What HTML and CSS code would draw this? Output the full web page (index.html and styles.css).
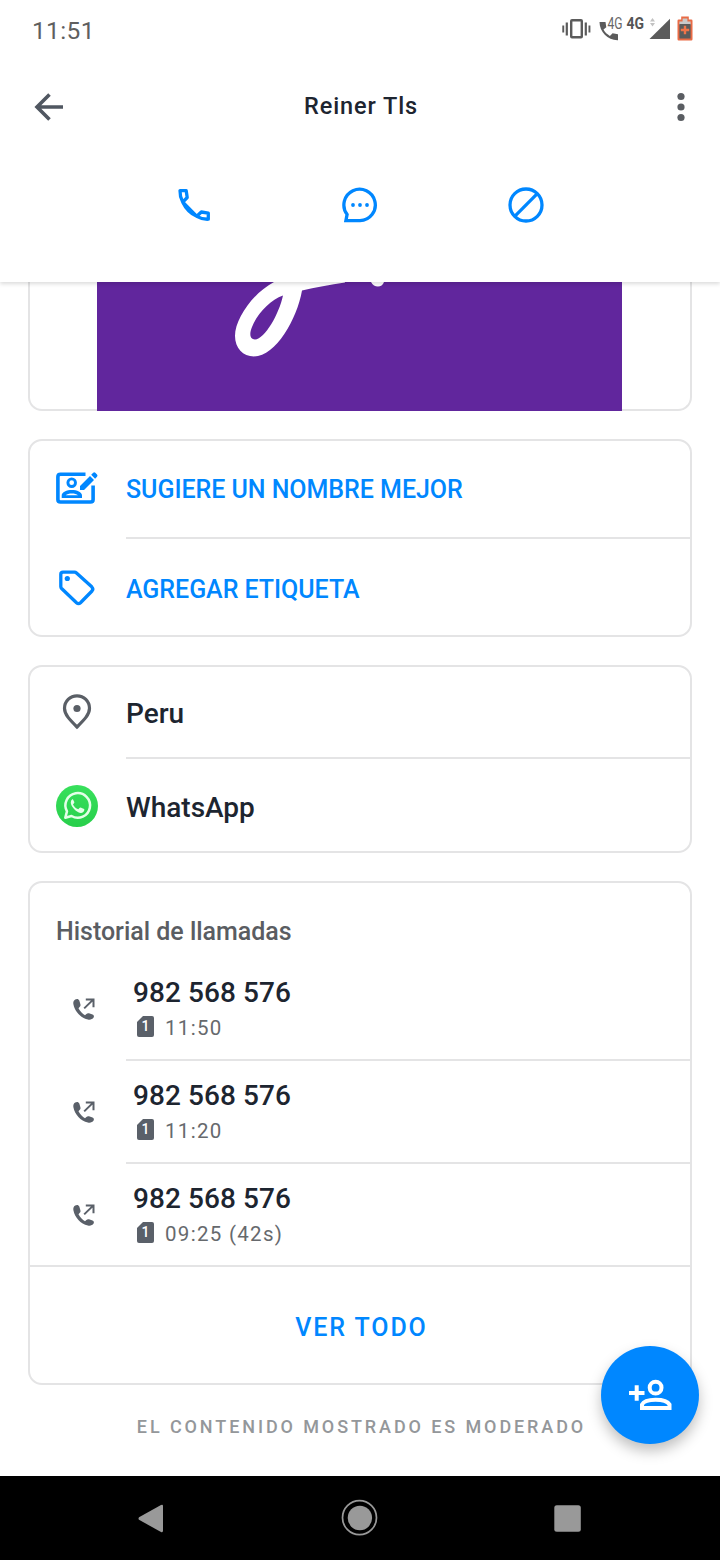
FILE: index.html
```html
<!DOCTYPE html>
<html lang="es">
<head>
<meta charset="utf-8">
<title>Reiner Tls</title>
<link rel="stylesheet" href="styles.css">
</head>
<body>
<svg class="defs" width="0" height="0" aria-hidden="true">
  <symbol id="outgoing" viewBox="0 0 24 24">
    <path d="M3.200 2.600C1.600 3.600 1 5.300 1.400 7.200c1.400 7.300 7.200 13.600 14.500 15.300 2.200.5 4.600-.1 5.700-1.900.7-1.300.2-2.600-1.100-3.100l-3.500-1.200c-1-.3-1.900 0-2.600.7l-1.400 1.300C10.600 16.800 7.800 14 6.500 11.200l1.300-1.400c.7-.7.9-1.600.6-2.600L7.300 3.600C6.700 1.900 4.700 1.600 3.200 2.600Z" fill="#5a6069"/>
    <path d="M12.200 11.400 20.900 2.900M13.800 2.400H21.500V10.200" fill="none" stroke="#5a6069" stroke-width="2"/>
  </symbol>
  <symbol id="sim" viewBox="0 0 17 21">
    <path d="M6 0H15a2 2 0 0 1 2 2V19a2 2 0 0 1-2 2H2a2 2 0 0 1-2-2V6Z" fill="#5a6069"/>
  </symbol>
</svg>

<div class="status">
  <span class="clock">11:51</span>
  <svg class="status-icons" width="134" height="28" viewBox="0 0 134 28">
    <g fill="#5b5b5b">
      <rect x="1.300" y="11.500" width="1.900" height="7"/><rect x="4.700" y="8.500" width="2.200" height="13"/>
      <rect x="23.700" y="8.500" width="2.200" height="13"/><rect x="27.500" y="11.500" width="1.900" height="7"/>
      <path d="M109 4.800V25L88.500 25Z"/>
      <path d="M38.500 8h6l.8 5.200-2.800 2.400c1.400 2.700 3.700 4.900 6.400 6.300l2.700-2.700 5.400 1v6C47 26.500 38.500 18 38.500 8Z"/>
    </g>
    <rect x="10.200" y="6.200" width="10.600" height="17" rx=".8" fill="none" stroke="#5b5b5b" stroke-width="2.400"/>
    <text x="46.500" y="15" class="net" textLength="15" lengthAdjust="spacingAndGlyphs">4G</text>
    <text x="65.500" y="15" class="net bold" textLength="17.500" lengthAdjust="spacingAndGlyphs">4G</text>
    <path d="M89 7.500 91.500 4 94 7.500M89 8.900 91.500 12.400 94 8.900Z" fill="#c2c2c2"/>
    <g transform="translate(-1 0)">
      <path d="M121.200 2.600h7.600v3h2.500q1.200 0 1.200 1.200v18.500q0 1.200-1.200 1.200h-12.600q-1.200 0-1.200-1.200V6.800q0-1.200 1.200-1.200h2.500Z" fill="#e96b45"/>
      <path d="M122.600 4.500h4.800v3h3.200V11h-11.200V7.500h3.200Z" fill="#c9c9c9"/>
      <rect x="119.400" y="10" width="11.200" height="14.500" fill="#5b5b5b"/>
      <path d="M125 11.800v8.400M120.800 16h8.400" stroke="#f07449" stroke-width="2.400"/>
    </g>
  </svg>
</div>

<header class="header">
  <div class="topbar">
    <svg width="30" height="30" viewBox="0 0 30 30"><path d="M29 15H3.500M15.500 2.500 3 15 15.500 27.500" fill="none" stroke="#505761" stroke-width="3.600"/></svg>
    <h1 class="title">Reiner Tls</h1>
    <svg width="30" height="30" viewBox="0 0 30 30" fill="#5a5d62"><circle cx="15" cy="4.500" r="3.600"/><circle cx="15" cy="15" r="3.600"/><circle cx="15" cy="25.500" r="3.600"/></svg>
  </div>
  <div class="actions">
    <svg width="36" height="36" viewBox="0 0 36 36" fill="none" stroke="#0087ff" stroke-width="3.300"><path d="M4 3.700H10.200L11.200 10.500 6.800 15.200C4.900 11.700 3.800 7.900 4 3.700ZM6.800 15.200C9.800 21.500 14.700 26.500 20.800 29.300ZM20.800 29.300 25.300 25 32.300 26.200V32.200C28.200 32.400 24.200 31.300 20.800 29.300Z" stroke-linejoin="round"/></svg>
    <svg width="36" height="36" viewBox="0 0 36 36"><path d="M3.900 33.600 5.100 27.400A15.700 15.700 0 1 1 18 33.600Z" fill="none" stroke="#0087ff" stroke-width="3.300"/><circle cx="11" cy="18" r="1.900" fill="#0087ff"/><circle cx="18" cy="18" r="1.900" fill="#0087ff"/><circle cx="25" cy="18" r="1.900" fill="#0087ff"/></svg>
    <svg width="36" height="36" viewBox="0 0 36 36" fill="none" stroke="#0087ff" stroke-width="3.300"><circle cx="18" cy="18" r="16"/><path d="M29.300 6.700 6.700 29.300"/></svg>
  </div>
</header>

<main class="content">
  <section class="card photo-card">
    <svg class="photo" width="525" height="129" viewBox="97 282 525 129">
      <path d="M97 282H622V411H97Z" fill="#61269d"/>
      <path fill-rule="evenodd" fill="#fff" d="M274 282C253 293 235 319 235 336C235 348 243 356.500 254 356.500C276 356 297 319 302 290.500C315 287 330 285 345 282.500V282ZM283 295.500C279 314 265 339 255 339.500C250 339.500 249 334 252 327C257 314 270 300 283 295.500Z"/>
      <path d="M371 282H384C382 288 374 288 371 282Z" fill="#fff"/>
    </svg>
  </section>

  <section class="card">
    <div class="row link">
      <svg class="raise" width="42" height="36" viewBox="0 0 42 36"><path d="M29.500 4.200H4.500Q1.900 4.200 1.900 6.700V29.500Q1.900 32 4.500 32H34.500Q37.100 32 37.100 29.500V15.500" fill="none" stroke="#0087ff" stroke-width="3.600"/><circle cx="15.700" cy="12.700" r="3.800" fill="none" stroke="#0087ff" stroke-width="2.900"/><path d="M5.700 28V25.500C5.700 18 26 18 26 25.500V28ZM9.700 25.200H22C19.500 22.900 12.200 22.900 9.700 25.200Z" fill="#0087ff" fill-rule="evenodd"/><path d="M24 20V16L34 6 38 10 28 20ZM35.200 4.800 37.200 2.800Q38.200 1.900 39.300 2.800L41 4.500Q42 5.600 41 6.700L39.100 8.700Z" fill="#0087ff"/></svg>
      <span>SUGIERE UN NOMBRE MEJOR</span>
    </div>
    <div class="divider"></div>
    <div class="row link second">
      <svg class="lower" width="42" height="38" viewBox="0 0 42 38"><path d="M7 3.200H18.500Q19.600 3.200 20.500 4L35.700 17.800Q37.800 20 36 22L24.500 33.700Q22.500 35.500 20.500 33.700L5.600 19.500Q4.800 18.700 4.800 17.500V5.200Q4.800 3.200 7 3.200Z" fill="none" stroke="#0087ff" stroke-width="3.300"/><circle cx="11.300" cy="9.500" r="2.600" fill="#0087ff"/></svg>
      <span>AGREGAR ETIQUETA</span>
    </div>
  </section>

  <section class="card">
    <div class="row place">
      <svg width="42" height="38" viewBox="0 0 42 38"><path d="M21 34C13.500 26.500 8.500 21.500 8.500 15.300A12.500 12.500 0 0 1 33.500 15.300C33.500 21.500 28.500 26.500 21 34Z" fill="none" stroke="#5a5f66" stroke-width="3.200"/><circle cx="21" cy="15.500" r="3.600" fill="#5a5f66"/></svg>
      <span>Peru</span>
    </div>
    <div class="divider"></div>
    <div class="row whatsapp">
      <svg class="lower" width="42" height="42" viewBox="0 0 42 42"><defs><linearGradient id="wa" x1="0" y1="0" x2="0" y2="1"><stop offset="0" stop-color="#38e05c"/><stop offset="1" stop-color="#28cf4b"/></linearGradient></defs><circle cx="21" cy="21" r="21" fill="url(#wa)"/><path d="M9.300 32.700 11 26.400A12.300 12.300 0 1 1 15.500 31Z" fill="none" stroke="#e4ffe8" stroke-width="2.500" stroke-linejoin="round"/><path d="M16.300 14.300c-2 1.500-1.900 4.200-.5 6.700 2.200 3.700 5.800 6.500 9 6.900 1.800.1 3.400-1.200 3.600-3.100l-.3-.8-3.500-1.600-.9.300-1.400 1.600c-2.400-.9-4.200-2.600-5.300-4.800l1.300-1.700v-.8L16.900 14.300Z" fill="#e4ffe8"/></svg>
      <span>WhatsApp</span>
    </div>
  </section>

  <section class="card history">
    <h2>Historial de llamadas</h2>
    <div class="call">
      <svg class="dir" width="24" height="24"><use href="#outgoing"/></svg>
      <div class="info"><div class="number">982 568 576</div><div class="meta"><span class="sim"><svg width="17" height="21"><use href="#sim"/></svg><b>1</b></span><span>11:50</span></div></div>
    </div>
    <div class="divider"></div>
    <div class="call">
      <svg class="dir" width="24" height="24"><use href="#outgoing"/></svg>
      <div class="info"><div class="number">982 568 576</div><div class="meta"><span class="sim"><svg width="17" height="21"><use href="#sim"/></svg><b>1</b></span><span>11:20</span></div></div>
    </div>
    <div class="divider"></div>
    <div class="call">
      <svg class="dir" width="24" height="24"><use href="#outgoing"/></svg>
      <div class="info"><div class="number">982 568 576</div><div class="meta"><span class="sim"><svg width="17" height="21"><use href="#sim"/></svg><b>1</b></span><span>09:25 (42s)</span></div></div>
    </div>
    <div class="divider full"></div>
    <div class="all">VER TODO</div>
  </section>
  <p class="note">EL CONTENIDO MOSTRADO ES MODERADO</p>
  <div class="fab">
    <svg width="98" height="98" viewBox="0 0 98 98" fill="none" stroke="#fff"><path d="M28 47H43.500M35.700 39.200V54.800" stroke-width="4"/><circle cx="54.600" cy="41.700" r="5.900" stroke-width="4"/><path d="M41 62V58.500C44 52 65 52 68.500 58.500V62Z" stroke-width="4"/></svg>
  </div>
</main>

<nav class="nav">
  <svg width="720" height="84" viewBox="0 0 720 84" fill="#999"><path d="M139 41.200 161 29Q163 28 163 30V54.500Q163 57 161 56L139 43.800Q138 42.500 139 41.200Z"/><circle cx="359.500" cy="41.700" r="17" fill="none" stroke="#999" stroke-width="1.700"/><circle cx="359.900" cy="42" r="12.200"/><rect x="554.300" y="29.300" width="26.500" height="26.500" rx="2.500"/></svg>
</nav>
</body>
</html>
```

FILE: styles.css
```css
* { box-sizing: border-box; }
body {
  margin: 0;
  width: 720px;
  height: 1560px;
  display: flex;
  flex-direction: column;
  overflow: hidden;
  background: #fff;
  color: #1d2530;
  font-family: Roboto, "Noto Sans", sans-serif;
}
svg { display: block; flex: none; }
.defs { position: absolute; }
.status {
  position: relative;
  z-index: 2;
  height: 60px;
  padding: 0 25px 0 32px;
  display: flex;
  justify-content: space-between;
  align-items: flex-start;
  background: #fff;
}
.clock { font-size: 24.500px; line-height: 61px; letter-spacing: .35px; color: #5f5f5f; }
.status-icons { margin-top: 14px; }
.net { font-size: 16px; fill: #666; }
.bold { font-weight: 700; fill: #555; }

.header { height: 222px; position: relative; z-index: 1; box-shadow: 0 2px 4px rgba(0, 0, 0, .14); background: #fff; }
.topbar { height: 94px; padding: 0 24px 0 34px; display: flex; justify-content: space-between; align-items: center; }
.title { margin: -3px 0 0 -8px; font-size: 23.500px; line-height: 28px; font-weight: 500; letter-spacing: .9px; }
.actions { display: flex; justify-content: space-between; padding: 33px 176px 0; }

.content { position: relative; height: 1194px; flex: none; display: flex; flex-direction: column; gap: 28px; padding: 0 28px; }
.card { flex: none; border: 2px solid #e4e4e5; border-radius: 14px; }
.photo-card { height: 129px; border-top: 0; border-radius: 0 0 14px 14px; }
.photo { margin-left: 67px; }
.row { display: flex; align-items: center; gap: 28px; height: 96px; padding-left: 26px; font-size: 28px; font-weight: 500; }
.raise { margin-bottom: 2px; }
.lower { margin-top: 2px; }
.link { color: #0087ff; font-size: 25px; letter-spacing: -.04px; }
.link span { padding-top: 1px; }
.second span { padding-top: 5px; }
.place { height: 90px; }
.place span { padding-top: 2px; }
.whatsapp { height: 92px; }
.whatsapp span { padding-top: 4px; }
.divider { height: 2px; margin-left: 96px; background: #e4e4e5; }
.divider.full { margin-left: 0; }

.history h2 { margin: 0; height: 75px; padding: 35px 0 0 26px; font-size: 25px; line-height: 28px; letter-spacing: -.02px; font-weight: 500; color: #5a5d62; }
.call { height: 101px; display: flex; align-items: center; padding-left: 42px; }
.dir { margin-top: 0; }
.info { padding: 5px 0 0 37px; }
.number { font-size: 28px; line-height: 34px; font-weight: 500; letter-spacing: .08px; }
.meta { display: flex; align-items: center; gap: 11px; padding-left: 4px; height: 36px; font-size: 20.500px; letter-spacing: 1.300px; color: #66696d; }
.sim { display: grid; width: 17px; margin-bottom: 3px; }
.sim > * { grid-area: 1 / 1; }
.sim b { font-size: 14px; line-height: 21px; text-align: center; font-weight: 500; color: #fff; letter-spacing: 0; }
.all { height: 116px; padding-left: 3px; line-height: 122px; text-align: center; font-size: 25px; font-weight: 500; letter-spacing: 1.900px; color: #0087ff; }
.note { margin: 3px 0 0; padding-left: 3px; text-align: center; font-size: 18px; line-height: 22px; font-weight: 500; letter-spacing: 2.900px; color: #94979a; }
.fab { position: absolute; right: 21px; bottom: 32px; width: 98px; height: 98px; border-radius: 50%; background: #0087ff; box-shadow: 0 7px 14px rgba(0, 0, 0, .25); }
.nav { height: 84px; flex: none; background: #000; position: relative; }
```
